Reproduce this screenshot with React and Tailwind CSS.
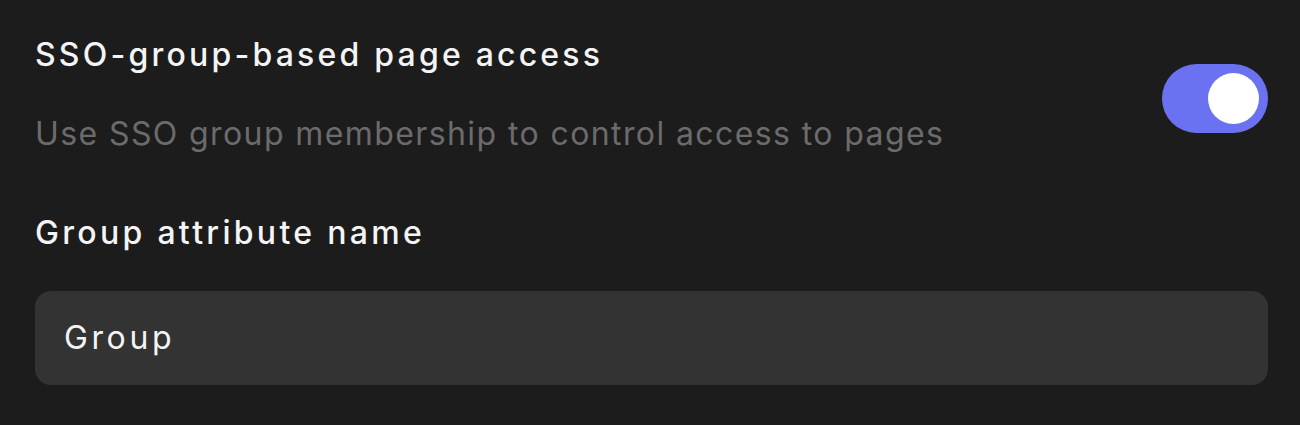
import React, { useState } from 'react';

const Toggle = ({ on, onChange }) => (
  <button
    type="button"
    onClick={() => onChange(!on)}
    className={`mt-[29px] w-[106px] h-[69px] rounded-full flex items-center px-[9px] shrink-0 ${on ? 'bg-[#6b72f2] justify-end' : 'bg-[#3a3a3a] justify-start'}`}
  >
    <span className="w-[51px] h-[51px] rounded-full bg-white block" />
  </button>
);

export default function App() {
  const [enabled, setEnabled] = useState(true);
  const [attr, setAttr] = useState('Group');

  return (
    <div className="w-[1300px] h-[425px] bg-[#1c1c1c] pl-[35px] pr-[32px] pt-[35px] font-['Inter',sans-serif]">
      <div className="flex items-start justify-between">
        <div className="flex flex-col gap-[39px]">
          <h2 className="text-[32px] leading-[40px] font-medium tracking-[3.2px] text-[#f4f4f4]">SSO-group-based page access</h2>
          <p className="text-[32px] leading-[40px] tracking-[1.4px] text-[#6b6b6b]">Use SSO group membership to control access to pages</p>
        </div>
        <Toggle on={enabled} onChange={setEnabled} />
      </div>
      <label className="block mt-[59px] text-[32px] leading-[40px] font-medium tracking-[3.3px] text-[#f4f4f4]">Group attribute name</label>
      <div className="mt-[38px] h-[94px] bg-[#333333] rounded-[16px] flex items-center px-[29px]">
        <input
          value={attr}
          onChange={(e) => setAttr(e.target.value)}
          className="w-full bg-transparent outline-none text-[32px] leading-[40px] tracking-[3.6px] text-[#f4f4f4]"
        />
      </div>
    </div>
  );
}
